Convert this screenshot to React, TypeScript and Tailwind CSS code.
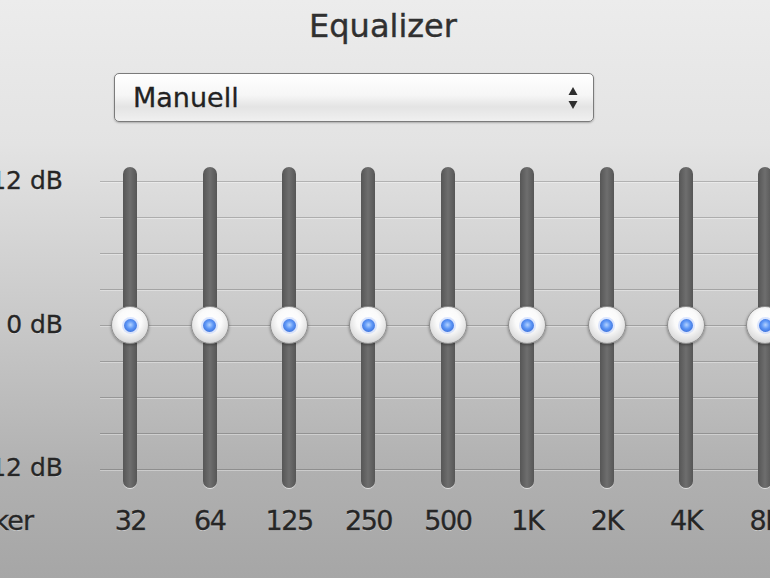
import React from "react";

const bands = ["32", "64", "125", "250", "500", "1K", "2K", "4K", "8K"];

function Knob() {
  return (
    <div className="absolute left-1/2 top-[139px] -translate-x-1/2 h-[38px] w-[38px] rounded-full border border-[#8e8e8e] bg-[radial-gradient(circle_at_50%_38%,#ffffff_0%,#fafafa_40%,#dcdcdc_72%,#a0a0a0_100%)] shadow-[0_1px_3px_rgba(0,0,0,0.4)] flex items-center justify-center">
      <div className="h-[17px] w-[17px] rounded-full bg-[rgba(120,160,255,0.25)] flex items-center justify-center">
        <div className="h-[13px] w-[13px] rounded-full bg-[radial-gradient(circle_at_50%_45%,#b3d2ff_0%,#5e97f6_40%,#2559cc_100%)]" />
      </div>
    </div>
  );
}

function Band({ label }: { label: string }) {
  return (
    <div className="w-[79.4px] shrink-0 flex flex-col items-center">
      <div className="relative h-[321px] w-[14px] rounded-full bg-gradient-to-r from-[#565656] via-[#6e6e6e] to-[#565656] shadow-[0_1px_0_rgba(255,255,255,0.6)]">
        <Knob />
      </div>
      <div className="mt-[18px] h-[30px] text-[27px] leading-[30px] tracking-[-1.5px] text-[#262626] [-webkit-text-stroke:0.3px_#262626] [text-shadow:0_1px_0_rgba(255,255,255,0.4)]">
        {label}
      </div>
    </div>
  );
}

function SelectArrows() {
  return (
    <svg width="12" height="26" viewBox="0 0 12 26">
      <path d="M6 2 L10.5 10 L1.5 10 Z" fill="#2e2e2e" />
      <path d="M1.5 16 L10.5 16 L6 24 Z" fill="#2e2e2e" />
    </svg>
  );
}

export default function App() {
  return (
    <div className="h-[578px] w-[770px] overflow-hidden flex flex-col bg-[linear-gradient(to_bottom,#ececec_0%,#e3e3e3_25%,#c9c9c9_55%,#b0b0b0_82%,#a6a6a6_100%)] font-['DejaVu_Sans',sans-serif] text-[#262626]">
      <div className="pt-[6px] h-[47px] pr-[4px] text-center text-[32px] leading-[40px] text-[#303030] [-webkit-text-stroke:0.4px_#303030] [text-shadow:0_1px_0_rgba(255,255,255,0.6)]">
        Equalizer
      </div>

      <div className="mt-[26px] ml-[114px] h-[49px] w-[480px] shrink-0 rounded-[5px] border border-[#7b7b7b] bg-[linear-gradient(to_bottom,#ffffff_0%,#f6f6f6_45%,#e4e4e4_70%,#f0f0f0_100%)] shadow-[0_1px_2px_rgba(0,0,0,0.25)] flex items-center justify-between pl-[18px] pr-[14px]">
        <span className="text-[27px] leading-none text-[#222] [-webkit-text-stroke:0.3px_#222]">Manuell</span>
        <SelectArrows />
      </div>

      <div className="mt-[45px] flex">
        {/* dB scale and preamp caption */}
        <div className="w-[100px] shrink-0 flex flex-col">
          <div className="h-[321px] pr-[37px] flex flex-col justify-between pb-[6px] text-[25px] leading-[28px] [-webkit-text-stroke:0.3px_#262626] [text-shadow:0_1px_0_rgba(255,255,255,0.4)]">
            <div className="flex justify-end whitespace-nowrap">+12 dB</div>
            <div className="flex justify-end whitespace-nowrap">0 dB</div>
            <div className="flex justify-end whitespace-nowrap">-12 dB</div>
          </div>
          <div className="mt-[18px] h-[30px] pr-[67px] flex justify-end whitespace-nowrap text-[27px] leading-[30px] tracking-[-1px] [-webkit-text-stroke:0.3px_#262626] [text-shadow:0_1px_0_rgba(255,255,255,0.4)]">
            Vorverstärker
          </div>
        </div>

        {/* grid lines behind the band sliders */}
        <div className="flex-1 bg-no-repeat bg-[position:0_14px] bg-[length:100%_290px] bg-[image:repeating-linear-gradient(to_bottom,rgba(0,0,0,0.2)_0px,rgba(0,0,0,0.2)_1px,rgba(255,255,255,0.35)_1px,rgba(255,255,255,0.35)_2px,transparent_2px,transparent_36px)]">
          <div className="-ml-[9.4px] flex">
            {bands.map((b) => (
              <Band key={b} label={b} />
            ))}
          </div>
        </div>
      </div>
    </div>
  );
}
